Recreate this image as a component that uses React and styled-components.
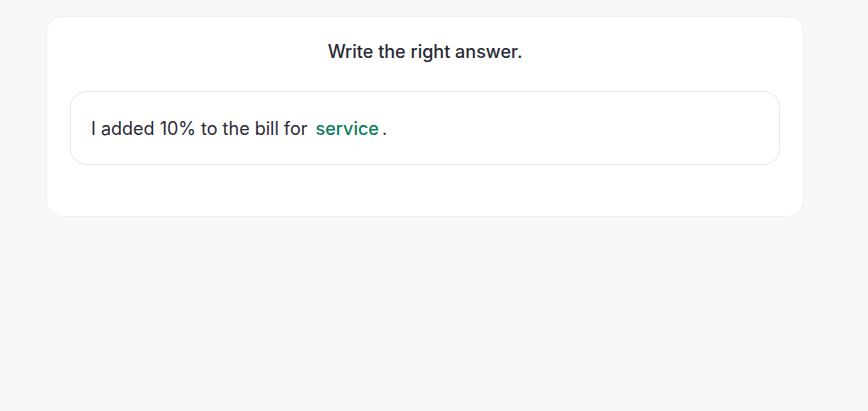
import styled, { createGlobalStyle } from "styled-components";

const GlobalStyle = createGlobalStyle`
  html, body {
    margin: 0;
    padding: 0;
    background: #f8f8fa;
    font-family: Inter, "Noto Sans", sans-serif;
  }
`;

const Page = styled.div`
  min-height: 411px;
  padding: 16px 0 0 46px;
  box-sizing: border-box;
`;

const Card = styled.div`
  width: 758px;
  box-sizing: border-box;
  background: #ffffff;
  border: 1px solid #f0f0f2;
  border-radius: 16px;
  padding: 23px 23px 51px;
  display: flex;
  flex-direction: column;
  gap: 27px;
`;

const Title = styled.h2`
  margin: 0;
  font-size: 18px;
  line-height: 24px;
  font-weight: 500;
  color: #2a2a36;
  text-align: center;
`;

const AnswerBox = styled.div`
  height: 74px;
  box-sizing: border-box;
  border: 1px solid #e7e7ea;
  border-radius: 16px;
  padding: 0 20px;
  display: flex;
  align-items: center;
  font-size: 18px;
  color: #2a2a36;
`;

const Answer = styled.span`
  color: #0a7d5e;
  font-weight: 500;
  padding: 0 3px 0 8px;
`;

export default function App() {
  return (
    <>
      <GlobalStyle />
      <Page>
        <Card>
          <Title>Write the right answer.</Title>
          <AnswerBox>
            <span>I added 10% to the bill for</span>
            <Answer>service</Answer>
            <span>.</span>
          </AnswerBox>
        </Card>
      </Page>
    </>
  );
}
